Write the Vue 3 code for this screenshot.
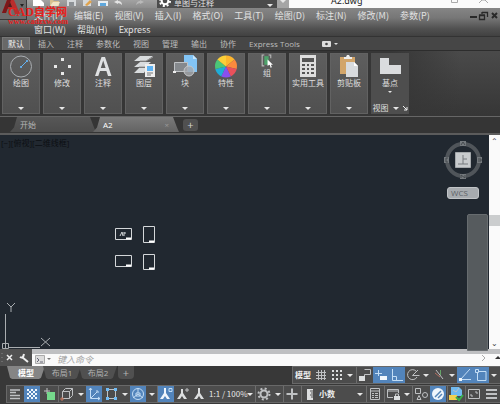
<script setup>
import { ref } from 'vue'

const menus = ['文件(F)', '编辑(E)', '视图(V)', '插入(I)', '格式(O)', '工具(T)', '绘图(D)', '标注(N)', '修改(M)', '参数(P)']
const moreMenus = ['窗口(W)', '帮助(H)', 'Express']
const tabs = ['默认', '插入', '注释', '参数化', '视图', '管理', '输出', '协作', 'Express Tools']
const active = ref('默认')
const panels = [
  { name: '绘图', icon: 'draw' },
  { name: '修改', icon: 'modify' },
  { name: '注释', icon: 'text' },
  { name: '图层', icon: 'layers' },
  { name: '块', icon: 'block' },
  { name: '特性', icon: 'wheel' },
  { name: '组', icon: 'group' },
  { name: '实用工具', icon: 'calc' },
  { name: '剪贴板', icon: 'clip' },
]
const layouts = ['模型', '布局1', '布局2']
const command = ref('')
</script>

<template>
  <div class="app">
    <header class="title">
      <div class="quick">
        <svg class="qicons" width="157" height="8" viewBox="0 0 157 8">
          <path d="M33 0h8l3 3v3H33z" fill="#fff" />
          <path d="M50 0h3l1 1h5v5h-9z" fill="#d9c08e" /><path d="M50 6l3-4h7l-2 4z" fill="#f1e4c6" />
          <path d="M67 0h9v6h-9z" fill="#d5d8da" /><path d="M69 2h5v4h-5z" fill="#8e9296" />
          <path d="M83 0h8v6h-8z" fill="#d5d8da" /><path d="M85 5l5-5 2 2-5 4z" fill="#e0a24b" />
          <path d="M98 1h10v5H98z" fill="#e9eef2" /><path d="M100 3h6v3h-6z" fill="#5fa8dd" />
          <path d="M114 2l4-2v1q4 0 4 4q-2-2-4-2v1z" fill="#e4e4e4" />
          <path d="M144 2l-4-2v1q-3 0-4 4q2-2 4-2v1z" fill="#b9b9b9" />
        </svg>
      </div>
      <div class="workspace">
        <svg width="12" height="12" viewBox="0 0 12 12"><circle cx="6" cy="6" r="3.3" fill="none" stroke="#fff" stroke-width="2" /><circle cx="6" cy="6" r="5" fill="none" stroke="#fff" stroke-width="2" stroke-dasharray="2 1.93" /></svg>
        <span>草图与注释</span><i class="caret"></i>
      </div>
      <div class="drop"><i class="caret"></i></div>
      <div class="doc"><span>A2.dwg</span></div>
      <svg class="sys" width="60" height="8" viewBox="0 0 60 8" fill="none" stroke="#aaa"><path d="M11.500 0v2.500h6V0M42 0l3 0 3 3M39 3l3-3" /></svg>
    </header>

    <nav class="menubar">
      <div class="menurow">
        <a v-for="m in menus" :key="m" href="#">{{ m }}</a>
        <svg class="mdi" width="30" height="10" viewBox="0 0 30 10" fill="none" stroke="#292929">
          <path d="M1 6h7" stroke-width="2" /><path d="M13 1.500h5.500v4.500M13 1v2M10.500 4.500h5v4h-5zM10 4h6" stroke-width="1.300" /><path d="M23 2l5 5M28 2l-5 5" stroke-width="2" />
        </svg>
      </div>
      <div class="menurow"><a v-for="m in moreMenus" :key="m" href="#">{{ m }}</a></div>
      <div class="brand">
        <button class="appbtn" aria-label="A">
          <svg width="26" height="27" viewBox="0 0 26 27"><path d="M2 13L7 0h7l6 14h-5l-2-5H7l-1 4z" fill="#b92d2d" /><path d="M7 0h4L6 13H2z" fill="#7c1719" /><path d="M8 7l2-5 2 5z" fill="#4b1d1e" /><path d="M20 4h4l-2 3z" fill="#222" /></svg>
        </button>
        <strong>CAD<span>自学网</span></strong><em>www.cadzxw.com</em>
      </div>
    </nav>

    <nav class="tabs">
      <button v-for="t in tabs" :key="t" :class="{ on: t === active }" @click="active = t">{{ t }}</button>
      <svg class="rec" width="20" height="8" viewBox="0 0 20 8"><rect x="1" y="1" width="9" height="6" rx="1" fill="#ddd" /><circle cx="5.500" cy="4" r="1.300" fill="#444" /><path d="M13 3h4l-2 2z" fill="#ddd" /></svg>
    </nav>

    <section class="ribbon">
      <button v-for="p in panels" :key="p.name" class="panel" :class="p.icon">
        <svg width="24" height="24" :viewBox="p.icon === 'group' ? '5 2 13 13' : '0 0 24 24'">
          <g v-if="p.icon === 'draw'" fill="none"><circle cx="12" cy="12.500" r="10.500" stroke="#a9adb1" /><path d="M12 13l6-6" stroke="#64b5f6" /><path d="M11.500 12.500h1v1h-1zM17.500 6.500h1v1h-1z" fill="#64b5f6" stroke="#64b5f6" /></g>
          <path v-else-if="p.icon === 'modify'" d="M11 4h3v3h-3zM4 11h3v3H4zM18 11h3v3h-3zM11 18h3v3h-3z" fill="#e8e8e8" />
          <path v-else-if="p.icon === 'text'" d="M4 22L10.500 3h3.500L20.500 22h-3.500l-1.600-5H9l-1.700 5zM9.800 14h4.800L12.200 6.500z" fill="#dfe1e3" fill-rule="evenodd" />
          <g v-else-if="p.icon === 'layers'"><path d="M8 2h13l-7 5H2zM8 8h11l-6 5H2zM7 14h8l-3 5H2z" fill="#d9dcde" /><path d="M8 7h6l7-4M7 13h6" stroke="#999" fill="none" /><path d="M13 10h10v13H13z" fill="#eee" /><path d="M15 12h6v5h-6z" fill="#5eb3f3" /><path d="M15 19h6M15 21h4" stroke="#777" /></g>
          <g v-else-if="p.icon === 'block'"><path d="M11 1h9l4 4v13H11z" fill="#82c4f5" /><path d="M20 1v4h4z" fill="#c7e5fb" /><path d="M1.500 8.500h13v9h-13z" fill="#85898d" stroke="#bfc2c5" /><circle cx="16" cy="17" r="5" fill="#a4a8ac" fill-opacity=".8" stroke="#c5c8ca" /><path d="M0 17h3v2H0z" fill="#eee" /></g>
          <g v-else-if="p.icon === 'wheel'">
            <path d="M12 12.500L12 1.500A11 11 0 0 1 20.600 5.600z" fill="#fdb52e" /><path d="M12 12.500L20.600 5.600A11 11 0 0 1 22.700 15z" fill="#fb8a3d" /><path d="M12 12.500L22.700 15A11 11 0 0 1 16.800 22.400z" fill="#e9515b" /><path d="M12 12.500L16.800 22.400A11 11 0 0 1 7.200 22.400z" fill="#8950ee" /><path d="M12 12.500L7.200 22.400A11 11 0 0 1 1.300 15z" fill="#1fadd8" /><path d="M12 12.500L1.300 15A11 11 0 0 1 3.400 5.600z" fill="#4bc678" /><path d="M12 12.500L3.400 5.600A11 11 0 0 1 12 1.500z" fill="#fbcf38" />
          </g>
          <g v-else-if="p.icon === 'group'"><path d="M9 3H7v10h2M13 3h2v3" fill="none" stroke="#bbb" /><path d="M9 4h4v8H9z" fill="#4ea36b" /><path d="M12 7l5 5-2 0 1 2-1 1-1-3-2 1z" fill="#fff" /></g>
          <g v-else-if="p.icon === 'calc'"><path d="M4 1h16v22H4z" fill="#dedede" /><path d="M6 4h12v4H6z" fill="#555" /><path d="M6 10h3v2H6zM11 10h2v2h-2zM15 10h3v2h-3zM6 14h3v2H6zM11 14h2v2h-2zM15 14h3v2h-3zM6 18h3v2H6zM11 18h2v2h-2zM15 18h3v2h-3z" fill="#555" /></g>
          <g v-else><path d="M3 3h15v17H3z" fill="#d2a56a" /><path d="M7 5V3h2l1-2h2l1 2h2v2z" fill="#eee" /><path d="M9 8h8l4 4v11H9z" fill="#d8dbde" /><path d="M17 8v4h4z" fill="#fff" /></g>
        </svg>
        <span>{{ p.name }}</span><i class="caret"></i>
      </button>
      <div class="panel view">
        <svg width="24" height="24" viewBox="0 0 24 24"><path d="M2 4h9v7h12v9H2z" fill="#dadcde" /></svg>
        <span>基点</span><i class="caret small"></i>
        <div class="foot"><span>视图</span><i class="caret"></i><svg width="5" height="5" viewBox="0 0 5 5"><path d="M0 0l4 4M4 1v3H1" fill="none" stroke="#eee" /></svg></div>
      </div>
    </section>

    <nav class="files">
      <button class="file">开始</button>
      <button class="file on"><span>A2</span><span class="x">×</span></button>
      <button class="plus">+</button>
    </nav>

    <main class="work">
      <div class="canvas">
        <span class="vp">[−][俯视][二维线框]</span>
        <svg class="sheets" width="40" height="46" viewBox="0 0 40 46" fill="none" stroke="#d4d7d9">
          <path d="M.5 2.500h16v11H.5zM28.500.5h11v16h-11zM.5 29.500h16v11H.5zM28.500 28.500h11v15h-11z" />
          <path d="M11 12.500h5M34 15.500h5M11 39.500h5M34 42.500h5" stroke="#fff" stroke-width="2" />
          <path d="M5 10l2-4 1 4M9 6v4M10 6v2" />
        </svg>
        <svg class="ucs" width="54" height="50" viewBox="0 0 54 50" fill="none" stroke="#a9adb0">
          <path d="M5.500 15v34M2.500 44.500h6v5h-6zM9 48.500h31M7 4l4 4 4-4M11 8v5M41 39l9 8M50 39l-9 8" />
        </svg>
        <svg class="cube" width="38" height="40" viewBox="0 0 38 40">
          <circle cx="19" cy="20" r="16" fill="none" stroke="#50555a" stroke-width="4" />
          <path d="M16 1h6v5h-6zM16 34h6v5h-6zM0 17h5v6H0zM33 17h5v6h-5z" fill="#74797d" />
          <path d="M17 5l2-3 2 3M17 38v-3l4 3v-3M4 18H2v4h2M34 19h3v2h-3" fill="none" stroke="#454a4e" />
          <path d="M11.500 12.500h15v15h-15z" fill="#c9ccce" stroke="#a5a9ac" />
          <path d="M19 15v9M19 19h4M14 24h10" fill="none" stroke="#777b7e" />
        </svg>
        <button class="wcs">WCS</button>
        <div class="navbar"></div>
      </div>
      <div class="scroll"><span>⌃</span><b></b><span class="dn">⌄</span></div>
    </main>

    <div class="cmd">
      <div class="tools">
        <svg width="32" height="18" viewBox="0 0 32 18" fill="none" stroke="#eee"><path d="M7 6l5 5M12 6l-5 5" stroke-width="1.500" /><path d="M22 8l6 5" stroke-width="2" /><path d="M20 8q3 2 4-3" stroke-width="2" /><path d="M2 4v1M2 8v1M2 12v1" stroke="#888" /></svg>
      </div>
      <div class="line">
        <svg width="20" height="12" viewBox="0 0 20 12"><path d="M3.500 1.500h9v8h-9z" fill="#ddd" stroke="#aaa" /><path d="M5 4l2 2-2 2M8 8h3" stroke="#667" fill="none" /><path d="M15 4h4l-2 2z" fill="#777" /></svg>
        <input v-model="command" aria-label="键入命令" placeholder="键入命令">
        <svg class="end" width="22" height="12" viewBox="0 0 22 12"><path d="M4 1l3 3-3 3" fill="none" stroke="#aaa" /><path d="M17 5l3-3 2 2v1z" fill="#333" /></svg>
      </div>
    </div>

    <footer class="bottom">
      <div class="upper">
        <nav class="layouts">
          <button v-for="(l, i) in layouts" :key="l" :class="{ on: i === 0 }">{{ l }}</button>
          <button class="add">+</button>
        </nav>
        <div class="bar high">
          <div class="grp">
            <button class="t word">模型</button>
            <button class="t" aria-label="栅格"><svg viewBox="0 0 16 16"><path d="M5.500 3v10M8.500 3v10M11.500 3v10M3 5.500h10M3 8.500h10M3 11.500h10" /></svg></button>
            <button class="t" aria-label="捕捉"><svg viewBox="0 0 16 16"><path class="f" d="M3 3h2v2H3zM7 3h2v2H7zM11 3h2v2h-2zM3 7h2v2H3zM7 7h2v2H7zM11 7h2v2h-2zM3 11h2v2H3zM7 11h2v2H7zM11 11h2v2h-2z" /></svg></button>
            <button class="c" aria-label="捕捉选项"><i class="caret"></i></button>
          </div>
          <div class="grp">
            <button class="t" aria-label="推断约束"><svg viewBox="0 0 16 16"><path d="M7.500 2.500h6v5h-6v3" /><path class="f" d="M2 9h6v5H2z" /></svg></button>
            <button class="t on" aria-label="动态输入"><svg viewBox="0 0 16 16"><path d="M5.500 3v6M2 6.500h7" /><path class="f" d="M7 9h7v4H7z" /></svg></button>
            <button class="t on" aria-label="正交"><svg viewBox="0 0 16 16"><path d="M3.500 2v11.500H14M3.500 9.500h4v4" /></svg></button>
            <button class="t" aria-label="极轴"><svg viewBox="0 0 16 16"><path d="M12 10a5 5 0 1 1-1-6M7.500 8.500h7M7.500 8.500L13 3" /></svg></button>
            <button class="c" aria-label="极轴选项"><i class="caret"></i></button>
            <button class="t" aria-label="等轴测"><svg viewBox="0 0 16 16"><path d="M5 3l7 9" /><path d="M9.500 3v5" stroke="#65a567" /><path d="M4 6l5 4" stroke="#b36e61" /></svg></button>
            <button class="c" aria-label="等轴测选项"><i class="caret"></i></button>
            <button class="t on" aria-label="追踪"><svg viewBox="0 0 16 16"><path d="M13 2L3.500 12.500H14" /><path class="f" d="M2 11h3v3H2z" /></svg></button>
            <button class="t on" aria-label="对象捕捉"><svg viewBox="0 0 16 16"><path d="M4.500 5v8.500h8.500v-9H6" /><path d="M2.500 2.500h3v3h-3z" /></svg></button>
            <button class="c" aria-label="捕捉设置"><i class="caret"></i></button>
          </div>
        </div>
      </div>
      <div class="bar low">
        <div class="grp">
          <button class="t" aria-label="线宽"><svg viewBox="0 0 16 16"><path d="M3 4h10M3 6.500h6M3 9.500h10M3 12.500h10" stroke-width="1.500" /></svg></button>
          <button class="t on" aria-label="透明度"><svg viewBox="0 0 16 16"><path class="f" d="M3 3h2v2H3zM7 3h2v2H7zM11 3h2v2h-2zM5 5h2v2H5zM9 5h2v2H9zM3 7h2v2H3zM7 7h2v2H7zM11 7h2v2h-2zM5 9h2v2H5zM9 9h2v2H9zM3 11h2v2H3zM7 11h2v2H7zM11 11h2v2h-2z" /></svg></button>
          <button class="t" aria-label="循环选择"><svg viewBox="0 0 16 16"><path d="M3 5h6M6 2v6" /><path d="M6 6h8v8H6z" fill="#75d98c" stroke="none" /></svg></button>
        </div>
        <div class="grp">
          <button class="t" aria-label="三维对象捕捉"><svg viewBox="0 0 16 16"><path d="M3.500 5.500h7v7h-7zM3.500 5.500l3-3h7v7l-3 3M10.500 5.500l3-3" /><path d="M2 12h2v2H2z" stroke="#c5775c" /></svg></button>
          <button class="c" aria-label="三维选项"><i class="caret"></i></button>
          <button class="t on" aria-label="动态 UCS"><svg viewBox="0 0 16 16"><path d="M4.500 2v10.500H14M5 12l6-6M3 4l1.500-2L6 4M12 11l2 1.500-2 1.500M10 5h2v2" /></svg></button>
          <button class="t" aria-label="选择过滤"><svg viewBox="0 0 16 16"><path d="M4.500 3.500h8v9h-8z" /><path d="M3 2h3v3H3zM11 2h3v3h-3zM3 11h3v3H3zM11 11h3v3h-3z" fill="#70bcf6" stroke="none" /></svg></button>
          <button class="c" aria-label="过滤选项"><i class="caret"></i></button>
          <button class="t on" aria-label="小控件"><svg viewBox="0 0 16 16"><circle cx="8" cy="8" r="5.500" /><path d="M8 2v5M8 8l-5 4M8 8l5 4M6 7h4v3H6z" /></svg></button>
          <button class="c" aria-label="小控件选项"><i class="caret"></i></button>
        </div>
        <div class="grp">
          <button class="t on" aria-label="注释可见性"><svg viewBox="0 0 16 16"><path class="f" d="M6 2h2v5l4 6H9L7 10l-2 3H2l4-6z" /><path d="M11 2.500h3v3h-3z" /></svg></button>
          <button class="t" aria-label="自动缩放"><svg viewBox="0 0 16 16"><path class="f" d="M6 3h2v4l4 6H9L7 10l-2 3H2l4-6z" /><path d="M10 4h4M12 2v4" /></svg></button>
          <button class="t" aria-label="注释比例"><svg viewBox="0 0 16 16"><path class="f" d="M6 2h2v5l4 6H9L7 10l-2 3H2l4-6z" /></svg></button>
          <button class="scale">1:1 / 100%</button>
          <button class="c" aria-label="比例选项"><i class="caret"></i></button>
        </div>
        <div class="grp">
          <button class="t" aria-label="切换工作空间"><svg viewBox="0 0 16 16"><circle cx="8" cy="8" r="3.500" stroke-width="2" /><circle cx="8" cy="8" r="5.500" stroke-width="2" stroke-dasharray="2 2.320" /></svg></button>
          <button class="c" aria-label="空间选项"><i class="caret"></i></button>
        </div>
        <div class="grp"><button class="t" aria-label="注释监视器"><svg viewBox="0 0 16 16"><path d="M8 2.500v11M2.500 8h11" stroke-width="2" /></svg></button></div>
        <div class="grp units">
          <label class="t" for="units" aria-label="单位"><svg viewBox="0 0 16 16"><path class="f" d="M5 3h6v11H5z" /><path d="M8 5h3M9 7h2M8 9h3M9 11h2" stroke="#555" /></svg></label>
          <select id="units"><option>小数</option></select><i class="caret"></i>
        </div>
        <div class="grp"><button class="t" aria-label="快捷特性"><svg viewBox="0 0 16 16"><path d="M3.500 2.500h9v11h-9zM3 5h10M5 7.500h2M8 7.500h3M5 9.500h2M8 9.500h3M5 11.500h2M8 11.500h3" /></svg></button></div>
        <div class="grp">
          <button class="t" aria-label="锁定界面"><svg viewBox="0 0 16 16"><path d="M8 11.500H2.500v-8h11V7M2 5h12" /><path class="f" d="M9 10h6v4H9z" /><path d="M10.500 10V8h3v2" /></svg></button>
          <button class="c" aria-label="锁定选项"><i class="caret"></i></button>
        </div>
        <div class="grp">
          <button class="t" aria-label="隔离对象"><svg viewBox="0 0 16 16"><path d="M2.500 2.500h5v5h-5zM4 13.500l2-4 2 4z" /><circle cx="12" cy="9" r="2.500" /></svg></button>
          <button class="t on" aria-label="硬件加速"><svg viewBox="0 0 16 16"><circle class="f" cx="8" cy="8" r="6" /><path d="M5 11l6-6M8 12l4-4" stroke="#5585b7" stroke-width="1.500" /></svg></button>
        </div>
        <div class="grp"><button class="t" aria-label="图形状态"><svg viewBox="0 0 16 16"><path d="M3 1h8l3 3v6H3z" fill="#70b9ef" stroke="none" /><path d="M5 4l3 2 3-4" /><path d="M1 9h8v5H1z" fill="#f3d04d" stroke="none" /><path d="M8 11l3 3 4-5" stroke="#39ae4a" stroke-width="2" /></svg></button></div>
        <div class="grp">
          <button class="t" aria-label="全屏显示"><svg viewBox="0 0 16 16"><path d="M2.500 3.500h11v9h-11zM9 6h2v2M7 10H5V8" /></svg></button>
          <button class="t" aria-label="自定义"><svg viewBox="0 0 16 16"><path d="M3 4h11M3 8h11M3 12h11" stroke-width="2" /></svg></button>
        </div>
      </div>
    </footer>
  </div>
</template>

<style>
body { background: #383838; }
</style>

<style scoped>
* { box-sizing: border-box; }
.app { min-height: 100vh; display: flex; flex-direction: column; overflow: hidden; font: 8px/12px "Open Sans", "Noto Sans CJK SC", sans-serif; color: #d2d2d2; background: #383838; }
button, input, select { font: inherit; color: inherit; border: 0; margin: 0; padding: 0; background: none; border-radius: 0; }
a { color: inherit; text-decoration: none; white-space: nowrap; }
svg { display: block; flex: none; }
.caret { display: block; flex: none; width: 0; border: 3px solid transparent; border-top: 3px solid #e6e6e6; border-bottom: 0; }
.caret.small { border-width: 2px 2px 0; }

.title { height: 8px; display: flex; overflow: hidden; background: #fafafa; }
.quick { width: 157px; background: linear-gradient(#a2a2a2, #8c8c8c); }
.workspace { width: 120px; display: flex; align-items: flex-end; gap: 3px; padding: 0 4px 1px 2px; background: #4b4b4b; font-size: 8px; line-height: 9px; color: #e1e1e1; }
.workspace .caret { margin-left: auto; }
.drop { width: 12px; display: flex; justify-content: center; background: #a5a5a5; }
.doc { flex: 1; display: flex; align-items: flex-end; padding: 0 0 2px 42px; font: 9px/10px "Noto Sans", sans-serif; color: #222; }

.menubar { position: relative; height: 29px; padding-top: 1px; background: linear-gradient(#858585, #777 35%, #505050 75%, #414141); font: 9px/12px "Noto Sans CJK SC", sans-serif; border-bottom: 1px solid #333; }
.menurow { display: flex; align-items: center; gap: 11px; height: 14px; padding-left: 34px; color: #e2e2e2; }
.mdi { margin: 0 1px 0 auto; }
.brand { position: absolute; left: 0; top: -8px; width: 70px; }
.appbtn { display: block; background: #6d6d6d; border-right: 1px solid #3a3a3a; border-bottom: 1px solid #3a3a3a; height: 20px; overflow: hidden; }
.brand strong, .brand em { position: absolute; left: 8px; color: #e8201c; white-space: nowrap; font-style: normal; font-family: "Liberation Serif", "Noto Sans CJK SC", serif; font-weight: bold; }
.brand strong { top: 6px; font-size: 12px; line-height: 12px; }
.brand strong span { font-size: 11px; }
.brand em { top: 18px; font-size: 8px; line-height: 8px; }

.tabs { height: 13px; display: flex; align-items: stretch; gap: 3px; padding-left: 2px; background: #464646; color: #bcbcbc; }
.tabs button { padding: 0 5px; line-height: 12px; white-space: nowrap; }
.tabs .on { color: #f0f0f0; background: #686868; border: 1px solid #777; border-bottom: 0; }
.rec { align-self: center; margin-left: 13px; }

.ribbon { display: flex; gap: 3px; height: 67px; padding: 2px; background: linear-gradient(90deg, #363636 78%, transparent 92%), linear-gradient(#4a4a4a, #363636); border-top: 1px solid #2d2d2d; border-bottom: 1px solid #666; }
.panel { width: 38px; display: flex; flex-direction: column; align-items: center; background: linear-gradient(#5e5e5e, #505050); border: 1px solid #626262; padding-bottom: 3px; font-size: 8px; line-height: 10px; color: #dedede; white-space: nowrap; }
.panel > .caret { margin-top: auto; }
.group > svg { width: 14px; height: 14px; }
.view { background: #4e4e4e; border-color: #4e4e4e; padding-bottom: 0; }
.panel > .small { margin-top: 3px; }
.foot { display: flex; align-items: center; gap: 4px; margin-top: auto; }

.files { height: 18px; display: flex; align-items: flex-end; padding: 0 0 1px 10px; background: #353535; border-bottom: 2px solid #5c5c5c; }
.file { display: flex; justify-content: space-between; align-items: center; width: 86px; height: 15px; padding: 0 10px; background: linear-gradient(#575757, #4c4c4c); clip-path: polygon(0 100%, 4px 70%, 7px 0, 80px 0, 84px 70%, 100% 100%); color: #b5b5b5; }
.file.on { background: linear-gradient(#7a7a7a, #636363); color: #fff; margin-left: -3px; }
.x { color: #999; }
.plus { width: 15px; height: 12px; margin: 0 0 1px 4px; border-radius: 3px; background: #505050; font-size: 11px; line-height: 10px; }

.work { flex: 1; min-height: 214px; display: flex; background: #fafafa; }
.canvas { flex: 1; position: relative; background: #212830; }
.vp { position: absolute; left: 1px; top: 2px; color: #0c0f13; }
.sheets { position: absolute; left: 115px; top: 91px; }
.ucs { position: absolute; left: 0; bottom: 0; }
.cube { position: absolute; right: 7px; top: 5px; }
.wcs { position: absolute; right: 10px; top: 52px; width: 32px; height: 12px; padding-left: 3px; text-align: left; line-height: 10px; background: #a7abaf; border: 1px solid #c1c4c7; border-radius: 3px; color: #5d6266; }
.navbar { position: absolute; right: 1px; top: 79px; bottom: -2px; width: 21px; z-index: 1; background: #565b5e; border: 1px solid #676c6f; border-radius: 2px 2px 0 0; }
.scroll { width: 11px; display: flex; flex-direction: column; align-items: center; color: #444; }
.scroll b { width: 100%; height: 11px; margin-top: 68px; background: #cbcdce; }
.scroll .dn { margin-top: auto; }

.cmd { display: flex; height: 17px; }
.tools { width: 32px; background: #515151; overflow: hidden; }
.line { flex: 1; display: flex; align-items: center; border-top: 5px solid #bfc0c2; background: #fafafa; }
.line input { flex: 1; min-width: 0; height: 12px; padding-left: 5px; font-size: 9px; font-style: italic; outline: none; color: #333; }
.line input::placeholder { color: #a3a3a3; opacity: 1; }

.bottom { padding-bottom: 2px; }
.upper { display: flex; justify-content: space-between; height: 19px; padding-bottom: 1px; }
.layouts { display: flex; height: 13px; padding-left: 7px; }
.layouts button { width: 38px; margin-right: -2px; line-height: 12px; background: #505050; clip-path: polygon(0 0, 100% 0, 34px 90%, 32px 100%, 5px 100%, 3px 90%); color: #b4b4b4; }
.layouts .on { background: #858585; color: #fff; font-weight: bold; }
.layouts .add { width: 16px; margin-left: 3px; clip-path: none; border-radius: 0 0 4px 4px; font-size: 11px; line-height: 10px; }
.bar { display: flex; height: 18px; background: #4c4c4c; border: 1px solid #686868; border-right: 0; }
.bar.low { margin-left: 6px; }
.grp { display: flex; align-items: center; gap: 1px; padding-right: 1px; }
.grp + .grp { border-left: 1px solid #6d6d6d; }
.t { flex: none; width: 16px; height: 16px; }
.t svg { width: 16px; height: 16px; fill: none; stroke: #bfc1c3; }
.t .f { fill: #dcdedf; stroke: none; }
.t.on { background: #5284bb; }
.t.on svg { stroke: #c3ddf5; }
.t.on .f { fill: #f0f6fc; }
.t.word { width: 20px; font-weight: bold; white-space: nowrap; color: #f0f0f0; }
.c { width: 9px; height: 16px; display: flex; justify-content: center; align-items: center; }
.high .grp { gap: 0; }
.high .c { width: 10px; }
.scale { width: 35px; font-family: "Noto Sans CJK SC", sans-serif; white-space: nowrap; color: #e6e6e6; }
.units { flex: 1; padding-right: 3px; }
.units select { flex: 1; min-width: 0; appearance: none; outline: none; font-weight: bold; color: #eee; }
</style>
